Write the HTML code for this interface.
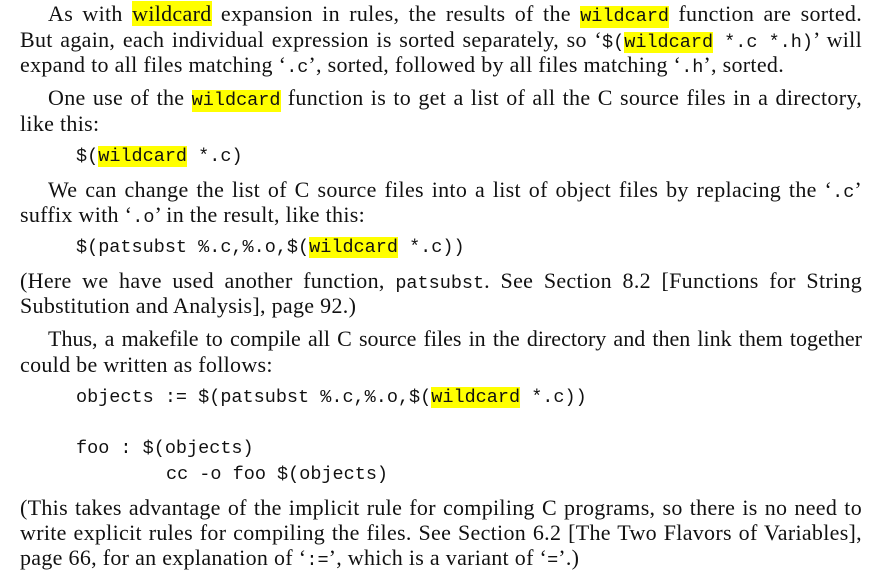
<!DOCTYPE html>
<html><head><meta charset="utf-8"><style>
html,body{margin:0;padding:0;background:#fff;width:896px;height:579px;overflow:hidden}
.l{position:absolute;height:24px;line-height:24px;font-family:"Liberation Serif",serif;font-size:22px;letter-spacing:0.3px;color:#111;white-space:nowrap}
.j{right:34px;text-align:justify;text-align-last:justify;white-space:normal}
.m,.c{font-family:"Liberation Mono",monospace;font-size:18.5px;letter-spacing:0}
.m{display:inline-block;white-space:pre;line-height:22px}
.h{background:#ffff00}
</style></head><body>
<div class="l j" style="top:2px;left:48px">As with <span class="h">wildcard</span> expansion in rules, the results of the <span class="m h">wildcard</span> function are sorted.</div>
<div class="l j" style="top:28px;left:20px">But again, each individual expression is sorted separately, so ‘<span class="m">$(<span class="h">wildcard</span> *.c *.h)</span>’ will</div>
<div class="l" style="top:53px;left:20px">expand to all files matching ‘<span class="m">.c</span>’, sorted, followed by all files matching ‘<span class="m">.h</span>’, sorted.</div>
<div class="l j" style="top:86px;left:48px">One use of the <span class="m h">wildcard</span> function is to get a list of all the C source files in a directory,</div>
<div class="l" style="top:112px;left:20px">like this:</div>
<div class="l c" style="top:145px;left:76px">$(<span class="h">wildcard</span> *.c)</div>
<div class="l j" style="top:178px;left:48px">We can change the list of C source files into a list of object files by replacing the ‘<span class="m">.c</span>’</div>
<div class="l" style="top:203px;left:20px">suffix with ‘<span class="m">.o</span>’ in the result, like this:</div>
<div class="l c" style="top:236px;left:76px">$(patsubst %.c,%.o,$(<span class="h">wildcard</span> *.c))</div>
<div class="l j" style="top:269px;left:20px">(Here we have used another function, <span class="m">patsubst</span>. See Section 8.2 [Functions for String</div>
<div class="l" style="top:294px;left:20px">Substitution and Analysis], page 92.)</div>
<div class="l j" style="top:327px;left:48px;letter-spacing:0;word-spacing:-1px">Thus, a makefile to compile all C source files in the directory and then link them together</div>
<div class="l" style="top:353px;left:20px">could be written as follows:</div>
<div class="l c" style="top:386px;left:76px">objects := $(patsubst %.c,%.o,$(<span class="h">wildcard</span> *.c))</div>
<div class="l c" style="top:437px;left:76px">foo : $(objects)</div>
<div class="l c" style="top:463px;left:166px">cc -o foo $(objects)</div>
<div class="l j" style="top:496px;left:20px">(This takes advantage of the implicit rule for compiling C programs, so there is no need to</div>
<div class="l j" style="top:521px;left:20px">write explicit rules for compiling the files. See Section 6.2 [The Two Flavors of Variables],</div>
<div class="l" style="top:546px;left:20px">page 66, for an explanation of ‘<span class="m">:=</span>’, which is a variant of ‘<span class="m">=</span>’.)</div>
</body></html>
